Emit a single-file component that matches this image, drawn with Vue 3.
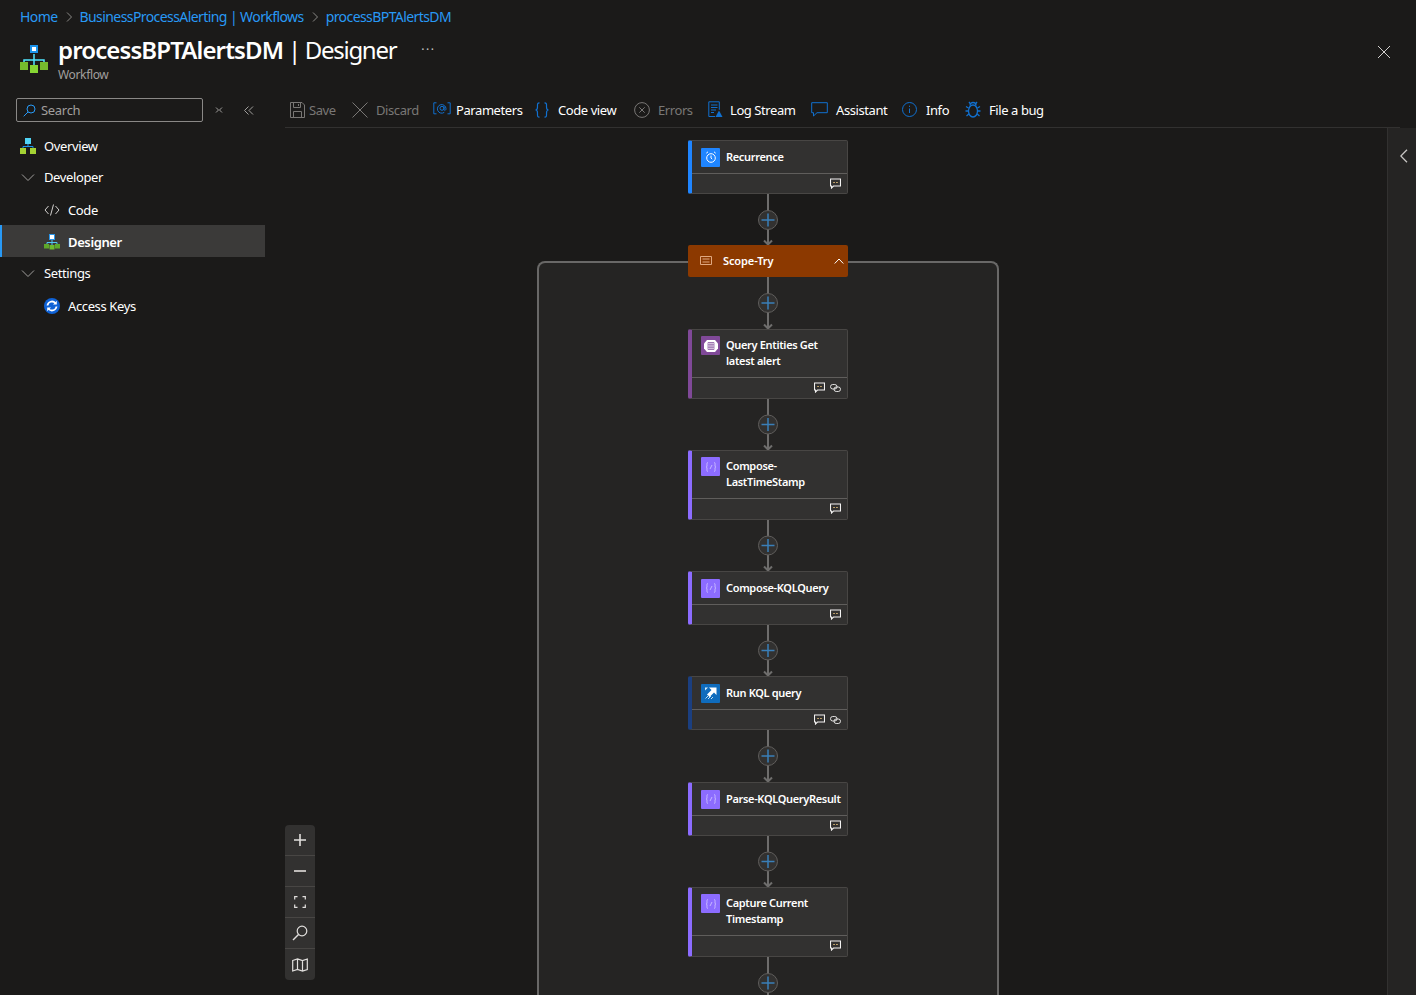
<script setup>
const tools = [
  { id: 'save', label: 'Save', off: true, w: 62, gap: 4 },
  { id: 'discard', label: 'Discard', off: true, w: 81, gap: 8 },
  { id: 'params', label: 'Parameters', w: 102, gap: 5 },
  { id: 'code', label: 'Code view', w: 99, gap: 9 },
  { id: 'errors', label: 'Errors', off: true, w: 74, gap: 8 },
  { id: 'log', label: 'Log Stream', w: 103, gap: 7 },
  { id: 'assistant', label: 'Assistant', w: 91, gap: 8 },
  { id: 'info', label: 'Info', w: 63, gap: 9 },
  { id: 'bug', label: 'File a bug', w: 90, gap: 8 },
]

const nodes = [
  { title: 'Query Entities Get latest alert', kind: 'table', accent: '#804998', link: true, gap: 51, tall: true },
  { title: 'Compose-LastTimeStamp', kind: 'compose', accent: '#8c6cff', gap: 51, tall: true },
  { title: 'Compose-KQLQuery', kind: 'compose', accent: '#8c6cff', gap: 51 },
  { title: 'Run KQL query', kind: 'kql', accent: '#1b3f80', link: true, gap: 52 },
  { title: 'Parse-KQLQueryResult', kind: 'compose', accent: '#8c6cff', gap: 51 },
  { title: 'Capture Current Timestamp', kind: 'compose', accent: '#8c6cff', gap: 52, tall: true },
]
</script>

<template>
  <div class="page">
    <header class="head">
      <nav class="crumbs">
        <a>Home</a>
        <svg width="8" height="10" viewBox="0 0 8 10"><path d="M2 .5 6.500 5 2 9.500" /></svg>
        <a>BusinessProcessAlerting | Workflows</a>
        <svg width="8" height="10" viewBox="0 0 8 10"><path d="M2 .5 6.500 5 2 9.500" /></svg>
        <a>processBPTAlertsDM</a>
      </nav>
      <div class="title-row">
        <svg class="logo filled" width="28" height="29" viewBox="0 0 28 29">
          <path d="M14 9v14M4 18v-3h20v3" fill="none" stroke="#50e6ff" stroke-width="1.500" />
          <rect x="11" y="1" width="6" height="6" fill="#fff" stroke="#1b93eb" stroke-width="2" />
          <rect x="0" y="17" width="8" height="8" fill="#76bc2d" />
          <rect x="10" y="20" width="8" height="8" fill="#86d633" />
          <rect x="20" y="17" width="8" height="8" fill="#76bc2d" />
        </svg>
        <div class="title-text">
          <h1><b>processBPTAlertsDM</b> | Designer</h1>
          <p>Workflow</p>
        </div>
        <span class="more">···</span>
        <svg class="close" width="14" height="14" viewBox="0 0 14 14"><path d="M1 1l12 12M13 1 1 13" /></svg>
      </div>
    </header>

    <div class="body">
      <aside class="side">
        <div class="search-row">
          <div class="search">
            <svg width="13" height="13" viewBox="0 0 13 13"><circle cx="8" cy="5" r="4" /><path d="M5 8 .7 12.300" /></svg>
            <span>Search</span>
          </div>
          <svg class="mini" width="8" height="8" viewBox="0 0 8 8"><path d="M1 1l2.500 2.500L1 6M7 1 4.500 3.500 7 6" transform="translate(0 .5)" /></svg>
          <svg class="mini" width="10" height="9" viewBox="0 0 10 9"><path d="M4.500.5.500 4.500l4 4M9 .5 5 4.500l4 4" /></svg>
        </div>
        <ul class="menu">
          <li class="lvl0">
            <svg class="ic filled" width="16" height="16" viewBox="0 0 16 16">
              <rect x="5" y="0" width="6" height="6" fill="#50d4f5" />
              <path d="M8 6v3M3 10V8.500h10V10" fill="none" stroke="#1b93eb" />
              <rect x="0" y="10" width="6" height="6" fill="#a4d233" />
              <rect x="10" y="10" width="6" height="6" fill="#a4d233" />
            </svg>
            Overview
          </li>
          <li class="lvl0 group">
            <svg class="ic chev" width="16" height="16" viewBox="0 0 16 16"><path d="M2 5.500l6 6 6-6" /></svg>
            Developer
          </li>
          <li class="lvl1">
            <svg class="ic code" width="16" height="16" viewBox="0 0 16 16"><path d="M4.500 4 1 8l3.500 4M11.500 4 15 8l-3.500 4M9.500 2.500 6.500 13.500" /></svg>
            Code
          </li>
          <li class="lvl1 on">
            <svg class="ic filled" width="16" height="16" viewBox="0 0 16 16">
              <rect x="5.500" y="0.500" width="5" height="5" fill="#fff" stroke="#2a93e5" />
              <path d="M8 6v5M3 10V8.500h10V10" fill="none" stroke="#50c8f5" />
              <rect x="0" y="10" width="5" height="4.500" fill="#5ea82a" />
              <rect x="5.500" y="11" width="5" height="4.500" fill="#6cbb2f" />
              <rect x="11" y="10" width="5" height="4.500" fill="#5ea82a" />
            </svg>
            Designer
          </li>
          <li class="lvl0 group tight">
            <svg class="ic chev" width="16" height="16" viewBox="0 0 16 16"><path d="M2 5.500l6 6 6-6" /></svg>
            Settings
          </li>
          <li class="lvl1">
            <svg class="ic filled" width="16" height="16" viewBox="0 0 16 16">
              <circle cx="8" cy="8" r="8" fill="#0f62d6" />
              <path d="M3.500 7.500A4.500 4.500 0 0 1 11.300 5M12.500 8.500A4.500 4.500 0 0 1 4.700 11" fill="none" stroke="#fff" stroke-width="1.800" />
              <path d="M12.800 2.800v3.800H9zM3.200 13.200V9.400H7z" fill="#fff" />
            </svg>
            Access Keys
          </li>
        </ul>
      </aside>

      <main class="main">
        <div class="toolbar">
          <button v-for="t in tools" :key="t.id" class="tool" :class="{ off: t.off }" :style="{ width: t.w + 'px', gap: t.gap + 'px' }">
            <svg v-if="t.id === 'save'" width="15" height="16" viewBox="0 0 15 16"><path d="M.5.500h11.500l2.500 2.500v12.500H.5zM3.500.5v5h7v-5M3.500 15.500v-6h8v6M8.500 2v2" /></svg>
            <svg v-else-if="t.id === 'discard'" width="16" height="16" viewBox="0 0 16 16"><path d="M.5.500l15 15M15.500.5l-15 15" /></svg>
            <svg v-else-if="t.id === 'params'" width="18" height="15" viewBox="0 0 18 15"><path d="M3.500.8H.8v11h2.700M14.500.8h2.700v11h-2.700" /><circle cx="9" cy="6.300" r="2" /><path d="M11 4.300v3.200c0 1.200 2 1.200 2-.7a4.300 4.300 0 1 0-1.700 3.500" /></svg>
            <svg v-else-if="t.id === 'code'" width="14" height="16" viewBox="0 0 14 16" stroke-width="1.200"><path d="M4.500.8C2 .8 2.500 3 2.500 5c0 2-.5 3-2 3 1.500 0 2 1 2 3 0 2-.5 4.200 2 4.200M9.500.8c2.500 0 2 2.200 2 4.200 0 2 .5 3 2 3-1.500 0-2 1-2 3 0 2 .5 4.200-2 4.200" /></svg>
            <svg v-else-if="t.id === 'errors'" width="16" height="16" viewBox="0 0 16 16"><circle cx="8" cy="8" r="7.400" /><path d="M5.300 5.300l5.400 5.400M10.700 5.300l-5.400 5.400" /></svg>
            <svg v-else-if="t.id === 'log'" width="15" height="17" viewBox="0 0 15 17"><path d="M7 15.500H.8V.8h10.500v8M3 4h6.500M3 6.500h6.500M3 9h5M3 11.500h3" /><path d="M11 9.500l3.500 6.500h-7z" fill="#1170cf" stroke="none" /></svg>
            <svg v-else-if="t.id === 'assistant'" width="17" height="15" viewBox="0 0 17 15"><path d="M.7.700h15.600v10H6l-3.500 3.300v-3.300H.7z" /></svg>
            <svg v-else-if="t.id === 'info'" width="15" height="15" viewBox="0 0 15 15"><circle cx="7.500" cy="7.500" r="7" /><path d="M7.500 6.500v4.500M7.500 3.700v1.200" /></svg>
            <svg v-else width="16" height="17" viewBox="0 0 16 17" stroke-width="1.300"><ellipse cx="8" cy="10" rx="4.500" ry="6" /><path d="M5 4.500a3 3 0 0 1 6 0M4 1l1.500 2M12 1l-1.500 2M3.500 7 1 5.500M12.500 7 15 5.500M3.500 10H.5M12.500 10h3M3.800 13 1.500 15M12.200 13l2.300 2" /></svg>
            <span>{{ t.label }}</span>
          </button>
        </div>

        <div class="work">
          <div class="canvas">
            <div class="flow">
              <section class="card" style="border-left-color:#1f85ff">
                <div class="card-top">
                  <span class="badge" style="background:#1f85ff">
                    <svg width="14" height="14" viewBox="0 0 14 14"><circle cx="7" cy="8" r="4.300" /><path d="M7 5.500V8l1.200 1.200M4 1.800 2.300 3.200M10 1.800l1.700 1.400" /></svg>
                  </span>
                  <span class="name">Recurrence</span>
                </div>
                <div class="card-foot">
                  <svg class="note" width="11" height="11" viewBox="0 0 11 11"><path d="M.5 1h10v7H3.500L1.500 10V8h-1z" /><path d="M3.300 4.500h1.500M6.200 4.500h1.500" stroke="#e5c07b" /></svg>
                </div>
              </section>

              <svg class="link" width="24" height="51" viewBox="0 0 24 51">
                <path class="wire" d="M12 0v50M8 46.500l4 4 4-4" />
                <circle cx="12" cy="26" r="9.500" />
                <path class="plus" d="M12 19.500v13M5.500 26h13" />
              </svg>

              <section class="scope">
                <div class="scope-head">
                  <svg width="12" height="9" viewBox="0 0 12 9"><path d="M.5.500h11v8H.5zM2.500 3h7M2.500 6h7" /></svg>
                  <span>Scope-Try</span>
                  <svg class="up" width="10" height="6" viewBox="0 0 10 6"><path d="M.7 5.500 5 1l4.300 4.500" /></svg>
                </div>
                <svg class="link" width="24" height="52" viewBox="0 0 24 52">
                  <path class="wire" d="M12 0v51M8 47.500l4 4 4-4" />
                  <circle cx="12" cy="26" r="9.500" />
                  <path class="plus" d="M12 19.500v13M5.500 26h13" />
                </svg>

                <template v-for="n in nodes" :key="n.title">
                  <section class="card" :class="{ tall: n.tall }" :style="{ borderLeftColor: n.accent }">
                    <div class="card-top">
                      <span class="badge" :style="{ background: n.kind === 'kql' ? '#0f6cbd' : n.accent }">
                        <svg v-if="n.kind === 'table'" width="16" height="14" viewBox="0 0 16 14"><path d="M4 1h8l3 3.500v5L12 13H4L1 9.500v-5z" fill="#fff" stroke="none" /><path d="M5 3.500h6v7H5zM5 5.800h6M5 8.200h6M7 3.500v7M9 3.500v7" stroke="#804998" stroke-width=".7" /></svg>
                        <svg v-else-if="n.kind === 'compose'" class="curly" width="14" height="14" viewBox="0 0 14 14"><path d="M4 2.500C2.500 2.500 3 4.500 3 6c0 .7-.5 1-1 1 .5 0 1 .3 1 1 0 1.500-.5 3.500 1 3.500M10 2.500c1.500 0 1 2 1 3.500 0 .7.5 1 1 1-.5 0-1 .3-1 1 0 1.500.5 3.500-1 3.500M8 5 6 9" /></svg>
                        <svg v-else width="16" height="16" viewBox="0 0 16 16"><path d="M6 2.500h7.500V10L11 7.500 6.500 12 4 9.500 8.500 5z" fill="#fff" stroke="none" /><path d="M2 2.500h3L2 5.500z" fill="#d6ecfa" stroke="none" /><path d="M2.500 13.500 6 10M5 14l3-3M8 14l2-2" stroke="#bfe0f5" stroke-width="1" /></svg>
                      </span>
                      <span class="name">{{ n.title }}</span>
                    </div>
                    <div class="card-foot">
                      <svg class="note" width="11" height="11" viewBox="0 0 11 11"><path d="M.5 1h10v7H3.500L1.500 10V8h-1z" /><path d="M3.300 4.500h1.500M6.200 4.500h1.500" stroke="#e5c07b" /></svg>
                      <svg v-if="n.link" class="chain" width="11" height="8" viewBox="0 0 11 8"><rect x=".5" y=".5" width="6.500" height="4.500" rx="2.200" /><rect x="4" y="3" width="6.500" height="4.500" rx="2.200" /></svg>
                    </div>
                  </section>
                  <svg class="link" width="24" :height="n.gap" :viewBox="`0 0 24 ${n.gap}`">
                    <path class="wire" :d="`M12 0v${n.gap - 1}M8 ${n.gap - 4.500}l4 4 4-4`" />
                    <circle cx="12" :cy="n.gap === 52 ? 26 : 25.500" r="9.500" />
                    <path class="plus" :d="`M12 ${n.gap === 52 ? 19.500 : 19}v13M5.500 ${n.gap === 52 ? 26 : 25.500}h13`" />
                  </svg>
                </template>
              </section>
            </div>

            <div class="zoom">
              <button><svg width="14" height="14" viewBox="0 0 14 14"><path d="M7 1v12M1 7h12" stroke-width="1.600" /></svg></button>
              <button><svg width="14" height="14" viewBox="0 0 14 14"><path d="M1 7h12" stroke-width="1.600" /></svg></button>
              <button><svg width="12" height="12" viewBox="0 0 12 12"><path d="M.7 3.500V.7h2.800M8.500.7h2.800v2.800M11.300 8.500v2.800H8.500M3.500 11.300H.7V8.500" stroke-width="1.200" /></svg></button>
              <button><svg width="16" height="16" viewBox="0 0 16 16"><circle cx="10" cy="6" r="4.800" stroke-width="1.200" /><path d="M6.500 9.500 1 15" stroke-width="1.500" /></svg></button>
              <button><svg width="16" height="14" viewBox="0 0 16 14"><path d="M.7 2.500 5.500 1l5 1.500L15.300 1v10.500L10.500 13l-5-1.500-4.800 1.500zM5.500 1v10.500M10.500 2.500V13" stroke-width="1.200" /></svg></button>
            </div>
          </div>

          <div class="rail">
            <svg width="8" height="14" viewBox="0 0 8 14"><path d="M7 .7.800 7 7 13.300" stroke-width="1.300" /></svg>
          </div>
        </div>
      </main>
    </div>
  </div>
</template>

<style>
html, body { background: #1b1a19; }
</style>

<style scoped>
.page {
  width: 1416px;
  height: 995px;
  overflow: hidden;
  background: #1b1a19;
  color: #fff;
  font-family: "Noto Sans", "Liberation Sans", sans-serif;
  font-size: 13px;
  letter-spacing: -.3px;
}
svg { fill: none; stroke: currentColor; flex: none; }
svg.filled { stroke: none; }

.head { height: 90px; padding: 0 20px; position: relative; }
.crumbs {
  height: 33px;
  display: flex;
  align-items: center;
  gap: 7px;
  font-size: 14px;
  color: #2899f5;
  letter-spacing: -.58px;
}
.crumbs svg { color: #8a8886; }
.title-row { display: flex; align-items: flex-start; padding-top: 2px; }
.logo { margin: 10px 10px 0 0; }
.title-text h1 {
  margin: 0;
  font-size: 24px;
  font-weight: 400;
  line-height: 30px;
  letter-spacing: -1.300px;
}
.title-text h1 b { font-weight: 600; letter-spacing: -.88px; }
.title-text p { margin: 2px 0 0; font-size: 12px; line-height: 16px; color: #a19f9d; letter-spacing: -.35px; }
.more { margin: 6px 0 0 25px; font-size: 12px; color: #c8c6c4; letter-spacing: 1.500px; }
.close { position: absolute; right: 25px; top: 45px; color: #d2d0ce; }

.body { display: flex; height: 905px; }
.side { width: 265px; flex: none; }
.search-row { display: flex; align-items: center; padding: 8px 0 0 16px; height: 32px; box-sizing: border-box; }
.search {
  width: 187px;
  height: 24px;
  box-sizing: border-box;
  border: 1px solid #8a8886;
  border-radius: 2px;
  display: flex;
  align-items: center;
  gap: 5px;
  padding-left: 6px;
  color: #a19f9d;
}
.search svg { color: #2899f5; }
.mini { color: #a19f9d; margin-left: 12px; }
.mini + .mini { margin-left: 21px; }

.menu { list-style: none; margin: 8px 0 0; padding: 0; letter-spacing: -.38px; }
.menu li { display: flex; align-items: center; height: 32px; box-sizing: border-box; }
.menu .lvl0 { padding-left: 20px; gap: 8px; }
.menu .lvl0.group { height: 31px; padding-bottom: 1px; }
.menu .lvl0.tight { height: 32px; padding-bottom: 0; }
.menu .lvl1 { padding: 1px 0 0 44px; gap: 8px; }
.menu .on { background: #3b3a39; box-shadow: inset 2px 0 #2899f5; font-weight: 600; }
.chev { color: #a19f9d; }
.code { color: #d2d0ce; }

.main { flex: 1; min-width: 0; padding-left: 20px; display: flex; flex-direction: column; }
.toolbar {
  height: 38px;
  box-sizing: border-box;
  border-bottom: 1px solid #323130;
  display: flex;
  align-items: center;
  padding: 2px 0 0 5px;
  margin-right: 16px;
}
.tool {
  display: flex;
  align-items: center;
  flex: none;
  padding: 0;
  background: none;
  border: 0;
  color: #fff;
  font: inherit;
  letter-spacing: -.42px;
  white-space: nowrap;
}
.tool svg { color: #1170cf; }
.tool.off { color: #797775; }
.tool.off svg { color: #797775; }

.work { flex: 1; display: flex; min-height: 0; }
.canvas { flex: 1; position: relative; overflow: hidden; padding: 12px 0 0 252px; }
.rail { width: 29px; box-sizing: border-box; background: #252423; border-left: 1px solid #323130; padding: 21px 0 0 12px; color: #c8c6c4; }
.rail svg { display: block; }

.flow { width: 462px; display: flex; flex-direction: column; align-items: center; }
.card {
  width: 160px;
  box-sizing: border-box;
  background: #323130;
  border: 1px solid #484644;
  border-left: 4px solid;
  border-radius: 2px;
  font-size: 11px;
  font-weight: 600;
}
.card-top {
  height: 33px;
  box-sizing: border-box;
  display: flex;
  align-items: center;
  gap: 6px;
  padding-left: 9px;
  border-bottom: 1px solid #605e5c;
}
.tall .card-top { height: 48px; align-items: flex-start; padding-top: 6px; }
.tall { padding-bottom: 1px; }
.badge { width: 19px; height: 19px; flex: none; display: flex; align-items: center; justify-content: center; color: #fff; border-radius: 1px; }
.curly { color: #c8b8ff; }
.name { line-height: 16px; letter-spacing: -.33px; white-space: nowrap; }
.tall .name { width: 100px; white-space: normal; margin-top: 1px; }
.card-foot { height: 19px; display: flex; justify-content: flex-end; align-items: center; gap: 5px; padding-right: 6px; }
.note, .chain { color: #f3f2f1; stroke-width: 1.100; }
.chain { stroke-width: .9; }

.link { display: block; }
.wire { stroke: #6e6d6c; stroke-width: 2; fill: none; }
.link circle { fill: #323130; stroke: #605e5c; }
.plus { stroke: #3a7fb8; stroke-width: 1.500; }

.scope {
  width: 462px;
  box-sizing: border-box;
  margin-top: 16px;
  min-height: 900px;
  background: #252423;
  border: 2px solid #696867;
  border-bottom: 0;
  border-radius: 8px 8px 0 0;
  display: flex;
  flex-direction: column;
  align-items: center;
}
.scope-head {
  width: 160px;
  height: 32px;
  margin-top: -18px;
  background: #8c3900;
  border-radius: 2px;
  display: flex;
  align-items: center;
  box-sizing: border-box;
  padding: 0 0 1px 12px;
  font-size: 11px;
  font-weight: 600;
  letter-spacing: -.1px;
  position: relative;
  flex: none;
}
.scope-head span { margin-left: 11px; }
.scope-head svg:first-child { color: #e0a880; }
.up { margin-left: auto; margin-right: 4px; }

.zoom {
  position: absolute;
  left: 0;
  top: 697px;
  width: 30px;
  background: #323130;
  border-radius: 4px;
  display: flex;
  flex-direction: column;
}
.zoom button {
  height: 31px;
  padding: 0;
  background: none;
  border: 0;
  border-bottom: 1px solid #484644;
  color: #e1dfdd;
  display: flex;
  align-items: center;
  justify-content: center;
}
.zoom button:last-child { border-bottom: 0; }
</style>
